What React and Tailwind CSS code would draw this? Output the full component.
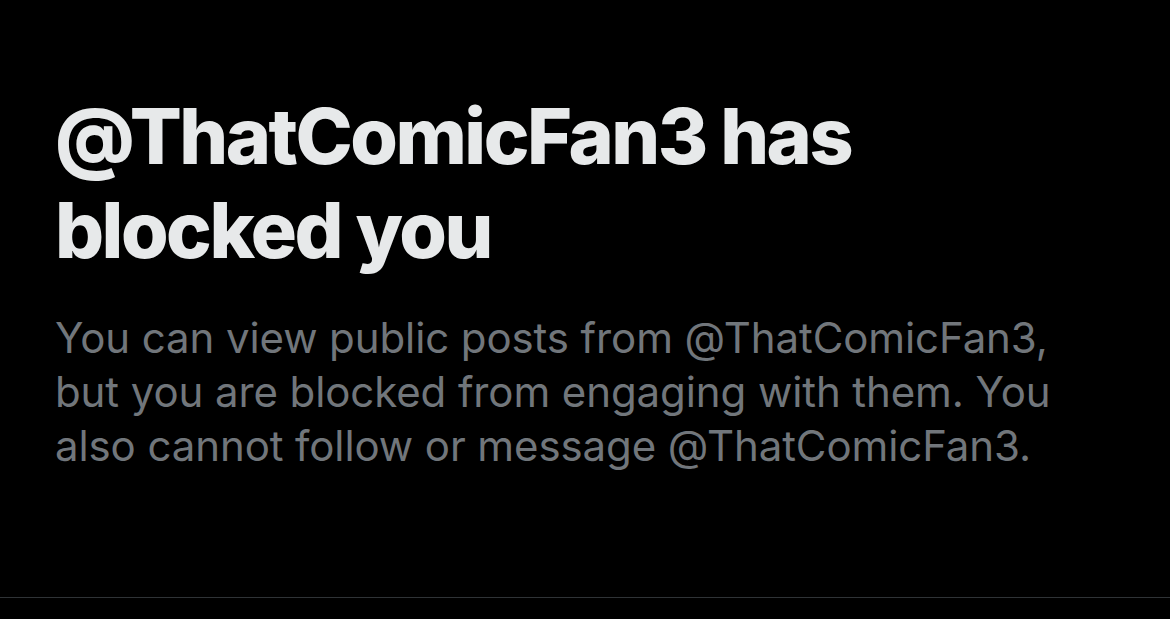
export default function App() {
  return (
    <div className="w-[1170px] h-[619px] bg-black flex flex-col" style={{ fontFamily: "Inter, 'Liberation Sans', sans-serif" }}>
      <div className="flex-1 flex flex-col pl-[55px] pt-[89px]">
        <h1 className="text-[77px] leading-[94px] font-extrabold text-[#e7e9ea] tracking-[-2.5px]">
          @ThatComicFan3 has
          <br />
          blocked you
        </h1>
        <p className="mt-[34px] text-[42px] leading-[54px] text-[#71767b] tracking-[-0.1px]">
          You can view public posts from @ThatComicFan3,
          <br />
          but you are blocked from engaging with them. You
          <br />
          also cannot follow or message @ThatComicFan3.
        </p>
      </div>
      <div className="h-px bg-[#2f3336] mb-[21px]" />
    </div>
  );
}
